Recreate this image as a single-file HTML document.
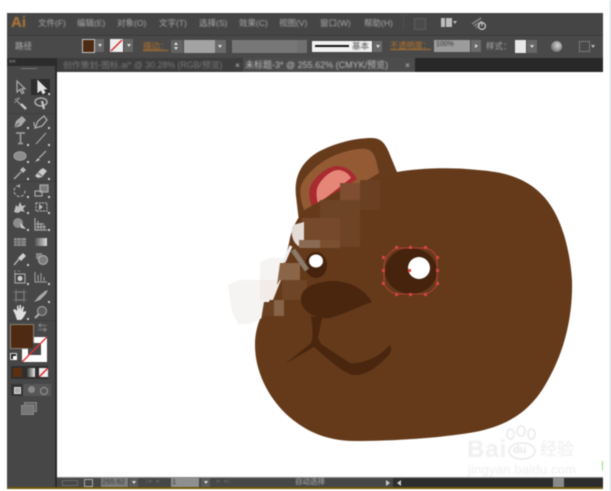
<!DOCTYPE html>
<html><head><meta charset="utf-8">
<style>
html,body{margin:0;padding:0;background:#fff;width:611px;height:491px;overflow:hidden}
body{position:relative;font-family:"Liberation Sans","Noto Sans CJK SC",sans-serif}
.a{position:absolute}
.t{position:absolute;white-space:nowrap;color:#ababab;font-size:8.5px;line-height:10px;filter:blur(.4px)}
#w{position:absolute;left:0;top:0;width:611px;height:491px;filter:blur(.4px)}
</style></head><body>
<div id="w">
<div class="a" style="left:7px;top:13px;width:596px;height:476px;background:#434343"></div>
<!-- menu bar -->
<div class="a" style="left:7px;top:13px;width:596px;height:22px;background:#454545"></div>
<div class="a" style="left:7px;top:35px;width:596px;height:1px;background:#3a3a3a"></div>
<div class="a" style="left:7px;top:36px;width:596px;height:22px;background:#494949"></div>
<div class="t" style="left:11px;top:14px;font-size:15px;line-height:18px;font-weight:bold;color:#b5793c">Ai</div>
<div class="t" style="left:38px;top:18px">文件(F)</div>
<div class="t" style="left:77px;top:18px">编辑(E)</div>
<div class="t" style="left:117px;top:18px">对象(O)</div>
<div class="t" style="left:159px;top:18px">文字(T)</div>
<div class="t" style="left:199px;top:18px">选择(S)</div>
<div class="t" style="left:239px;top:18px">效果(C)</div>
<div class="t" style="left:279px;top:18px">视图(V)</div>
<div class="t" style="left:320px;top:18px">窗口(W)</div>
<div class="t" style="left:364px;top:18px">帮助(H)</div>
<div class="a" style="left:403px;top:15px;width:1px;height:15px;background:#4f4f4f"></div>
<div class="a" style="left:414px;top:18px;width:10px;height:10px;border:1px solid #5c5c5c;background:#4a4a4a"></div>
<div class="a" style="left:441px;top:18px;width:11px;height:9px;background:#bdbdbd"></div>
<div class="a" style="left:445px;top:18px;width:1px;height:9px;background:#444"></div>
<div class="a" style="left:453px;top:21px;border-left:2.5px solid transparent;border-right:2.5px solid transparent;border-top:3px solid #bbb"></div>
<svg class="a" style="left:470px;top:15px" width="18" height="16"><path d="M2 9L11 3M4 11L12 6M6 13L10 10" stroke="#8a8a8a" stroke-width="1.4"/><circle cx="12" cy="11" r="3.4" fill="none" stroke="#ccc" stroke-width="1.2"/><path d="M12 7v4" stroke="#ccc"/></svg>
<!-- control bar -->
<div class="t" style="left:15px;top:41px;color:#b5b5b5">路径</div>
<div class="a" style="left:82px;top:39px;width:11px;height:12px;background:#4d2a12;border:1px solid #c5c5c5"></div>
<div class="a" style="left:95px;top:39px;width:9px;height:13px;background:#666"></div>
<div class="a" style="left:98px;top:44px;border-left:2px solid transparent;border-right:2px solid transparent;border-top:3px solid #ddd"></div>
<svg class="a" style="left:110px;top:39px" width="13" height="13"><rect width="13" height="13" fill="#eee"/><path d="M1 12L12 1" stroke="#d32f2f" stroke-width="1.5"/></svg>
<div class="a" style="left:124px;top:39px;width:9px;height:13px;background:#666"></div>
<div class="a" style="left:127px;top:44px;border-left:2px solid transparent;border-right:2px solid transparent;border-top:3px solid #ddd"></div>
<div class="t" style="left:143px;top:41px;color:#b8742c;text-decoration:underline">描边：</div>
<div class="a" style="left:171px;top:40px;width:12px;height:13px;background:#626262"></div>
<div class="a" style="left:174px;top:42px;border-left:2px solid transparent;border-right:2px solid transparent;border-bottom:3px solid #ddd"></div>
<div class="a" style="left:174px;top:47px;border-left:2px solid transparent;border-right:2px solid transparent;border-top:3px solid #ddd"></div>
<div class="a" style="left:184px;top:40px;width:31px;height:13px;background:#a3a3a3"></div>
<div class="a" style="left:215px;top:40px;width:11px;height:13px;background:#6a6a6a"></div>
<div class="a" style="left:218px;top:45px;border-left:2.5px solid transparent;border-right:2.5px solid transparent;border-top:3px solid #ddd"></div>
<div class="a" style="left:232px;top:40px;width:65px;height:13px;background:#777"></div>
<div class="a" style="left:297px;top:40px;width:10px;height:13px;background:#707070"></div>
<div class="a" style="left:312px;top:41px;width:60px;height:11px;background:#f2f2f2"></div>
<div class="a" style="left:315px;top:45px;width:34px;height:2px;background:#111"></div>
<div class="t" style="left:352px;top:41px;color:#444">基本</div>
<div class="a" style="left:373px;top:41px;width:9px;height:11px;background:#696969"></div>
<div class="a" style="left:376px;top:45px;border-left:2px solid transparent;border-right:2px solid transparent;border-top:3px solid #ddd"></div>
<div class="t" style="left:390px;top:41px;font-size:8.200px;color:#b8742c;text-decoration:underline">不透明度：</div>
<div class="a" style="left:434px;top:40px;width:36px;height:12px;background:#9c9c9c"></div>
<div class="t" style="left:436px;top:40px;color:#333;font-size:7px">100%</div>
<div class="a" style="left:471px;top:40px;width:10px;height:12px;background:#6a6a6a"></div>
<div class="a" style="left:475px;top:44px;border-top:2.5px solid transparent;border-bottom:2.5px solid transparent;border-left:3px solid #ddd"></div>
<div class="t" style="left:486px;top:41px">样式：</div>
<div class="a" style="left:515px;top:40px;width:11px;height:13px;background:#e8e8e8"></div>
<div class="a" style="left:527px;top:40px;width:10px;height:13px;background:#666"></div>
<div class="a" style="left:530px;top:45px;border-left:2px solid transparent;border-right:2px solid transparent;border-top:3px solid #ddd"></div>
<div class="a" style="left:551px;top:41px;width:11px;height:11px;border-radius:50%;background:radial-gradient(circle at 60% 40%,#d5d5d5,#777 70%)"></div>
<div class="a" style="left:579px;top:41px;width:9px;height:9px;border:1px dotted #aaa"></div>
<div class="a" style="left:591px;top:45px;border-left:2.5px solid transparent;border-right:2.5px solid transparent;border-top:3px solid #bbb"></div>
<!-- tabs -->
<div class="a" style="left:7px;top:58px;width:596px;height:14px;background:#282828"></div>
<div class="a" style="left:57px;top:58px;width:186px;height:14px;background:#3d3d3d"></div>
<div class="a" style="left:243px;top:58px;width:172px;height:14px;background:#4c4c4c"></div>
<div class="t" style="left:63px;top:60px;font-size:8.800px;color:#7a7a7a">创作策划-图标.ai* @ 30.28% (RGB/预览)</div>
<div class="t" style="left:235px;top:60px;color:#ccc">×</div>
<div class="t" style="left:245px;top:60px;font-size:9px;color:#bdbdbd">未标题-3* @ 255.62% (CMYK/预览)</div>
<div class="t" style="left:405px;top:60px;color:#ccc">×</div>
<!-- toolbar -->
<div class="a" style="left:7px;top:58px;width:48px;height:431px;background:#474747"></div>
<div class="a" style="left:7px;top:58px;width:48px;height:8px;background:#2c2c2c"></div>
<div class="t" style="left:9px;top:57px;font-size:6px;color:#aaa">««</div>
<div class="a" style="left:21px;top:68px;width:16px;height:1px;background:#777"></div>
<div class="a" style="left:55px;top:58px;width:2px;height:431px;background:#2a2a2a"></div>
<div class="a" style="left:31px;top:79px;width:19px;height:16px;background:#2e2e2e"></div>
<div class="a" style="left:7px;top:113px;width:48px;height:1px;background:#3f3f3f"></div>
<div class="a" style="left:7px;top:181px;width:48px;height:1px;background:#3f3f3f"></div>
<div class="a" style="left:7px;top:320px;width:48px;height:1px;background:#3f3f3f"></div>
<svg class="a" style="left:0;top:0" width="60" height="330" fill="none" stroke="#aeaeae" stroke-width="1.200">
<!-- row1 -->
<g transform="translate(20,87)"><path d="M-3-6V5L0 2.500 2 6.500 3.800 5.500 1.800 1.800H5Z"/></g>
<g transform="translate(41,87)"><path d="M-3-6V5L0 2.500 2 6.500 3.800 5.500 1.800 1.800H5Z" fill="#e2e2e2" stroke="#e2e2e2"/></g>
<!-- row2 -->
<g transform="translate(20,103)"><path d="M-5-4 1 2" stroke-width="1"/><path d="M1 1l5 5" stroke-width="2.400" stroke="#c8c8c8"/><path d="M-3-5l1 2M-6-1l2 .5M-1-5.500l0 2" stroke-width=".9"/></g>
<g transform="translate(41,103)"><ellipse cx="0" cy="-1" rx="6" ry="4" stroke-width="1.500"/><path d="M1-2l2 8" stroke-width="2.200" stroke="#c8c8c8"/></g>
<!-- row3 -->
<g transform="translate(20,122)"><path d="M-6 6-4-1 2-6 6-2 1 4Z" fill="#a8a8a8" stroke="none"/><path d="M-6 6-1 1" stroke="#474747" stroke-width=".8"/></g>
<g transform="translate(41,122)"><path d="M-6 6-3-1 3-6 6-2 1 4Z" stroke-width="1.300"/><path d="M-7 0C-7 3-6 5-5 6"/></g>
<!-- row4 -->
<g transform="translate(20,138)"><path d="M-4-5H5M.5-5V5M-2 5.500H3" stroke="#999" stroke-width="1.700"/></g>
<g transform="translate(41,138)"><path d="M-5 6 5-5" stroke="#a0a0a0"/></g>
<!-- row5 -->
<g transform="translate(20,156)"><ellipse cx="0" cy="0" rx="6" ry="4.300" fill="#8c8c8c" stroke="#9c9c9c"/></g>
<g transform="translate(41,156)"><path d="M-2 2 5-5" stroke="#b8b8b8" stroke-width="1.200"/><path d="M-6 6-3 2-1 4Z" fill="#c4c4c4" stroke="none"/></g>
<!-- row6 -->
<g transform="translate(20,173)"><path d="M-6 6 1-1" stroke-width="1.300"/><path d="M0-3 3-6 6-3 3 0Z" fill="#bbb" stroke="none"/></g>
<g transform="translate(41,173)"><path d="M-6 3-1-3 2-5 6-2 1 4-3 5Z" fill="#c8c8c8" stroke="none"/><path d="M-3 0 1 3" stroke="#6a6a6a"/></g>
<!-- row7 -->
<g transform="translate(20,191)"><path d="M-1-5.500A5.500 5.500 0 1 0 5-1" stroke-dasharray="3 1.500" stroke="#a0a0a0"/><path d="M-3-5 0-7V-3Z" fill="#aaa" stroke="none"/></g>
<g transform="translate(41,191)"><rect x="-1" y="-6" width="8" height="7" fill="#7a7a7a" stroke="#a8a8a8"/><rect x="-6" y="0" width="7" height="5" stroke="#a8a8a8"/></g>
<!-- row8 -->
<g transform="translate(20,207)"><path d="M-6 5-4-2-2 0 0-5 2-1 6-2 3 2 5 5 1 4-2 6Z" fill="#bcbcbc" stroke="none"/></g>
<g transform="translate(41,207)"><rect x="-5" y="-4" width="11" height="8" stroke-dasharray="2 1" stroke="#aaa"/><path d="M-2-3 2 0-2 3Z" fill="#bbb" stroke="none"/></g>
<!-- row9 -->
<g transform="translate(20,224)"><circle cx="-2" cy="-1" r="5" fill="#8c8c8c" stroke="none"/><path d="M0-2 6 5 1 4Z" fill="#c8c8c8" stroke="none"/></g>
<g transform="translate(41,224)"><path d="M-6-6V6H6" stroke="#aaa"/><path d="M-3-3V5M0-1V5M3 1V5M-5 0H3M-5 3H5" stroke="#a2a2a2" stroke-width="1.300"/></g>
<!-- row10 -->
<g transform="translate(20,242)"><rect x="-6" y="-4" width="12" height="8" fill="#8d8d8d" stroke="none"/><path d="M-6-1H6M-6 1.500H6M-3-4V4M1-4V4" stroke="#5b5b5b" stroke-width=".7"/></g>
<g transform="translate(41,242)"><defs><linearGradient id="g"><stop offset="0" stop-color="#555"/><stop offset="1" stop-color="#ddd"/></linearGradient></defs><rect x="-6" y="-4" width="12" height="8" fill="url(#g)" stroke="none"/></g>
<!-- row11 -->
<g transform="translate(20,259)"><path d="M-6 6-1 0" stroke-width="1.500"/><path d="M-2-1 3-6 6-3 1 2Z" fill="#d0d0d0" stroke="none"/></g>
<g transform="translate(41,259)"><circle cx="2" cy="1" r="4.500" fill="#7c7c7c" stroke="#a6a6a6"/><path d="M-5-5H1M-5-3H1M-5-1H-1" stroke="#aaa"/></g>
<!-- row12 -->
<g transform="translate(20,277)"><rect x="-5" y="-3" width="10" height="9" stroke="#a4a4a4"/><circle cx="0" cy="1.500" r="2.500" fill="#d0d0d0" stroke="none"/><path d="M-6-6h2M-2-6H0M-6-4h2" stroke="#8d8d8d" stroke-width="1"/></g>
<g transform="translate(41,277)"><path d="M-6-5V5H6M-3 4V-2M0 4V-4M3 4V0" stroke="#949494" stroke-width="1.200"/></g>
<!-- row13 -->
<g transform="translate(20,296)"><rect x="-4" y="-4" width="8" height="8" stroke="#9a9a9a"/><path d="M-7-4H7M-7 4H7M-4-7V7M4-7V7" stroke="#777" stroke-width=".8"/></g>
<g transform="translate(41,296)"><path d="M-7 6-2 0 4-5 7-6 5-2-1 4Z" fill="#a8a8a8" stroke="none"/></g>
<!-- row14 -->
<g transform="translate(20,313)"><path d="M-5 1-7-3-5-4-3-2V-7L-2-8-1-3-.5-8H1V-3L3-7 4-6 3-1 6-2 6 0 3 5 1 7H-3Z" fill="#e0e0e0" stroke="none"/></g>
<g transform="translate(41,312)"><circle cx="1" cy="-1" r="4.500" stroke="#9a9a9a" fill="#5c5c5c"/><path d="M-2 2-6 6" stroke="#b0b0b0" stroke-width="2"/></g>
<!-- corner marks -->
<g fill="#cfcfcf" stroke="none">
<rect x="48" y="93" width="2" height="2"/><rect x="27" y="127" width="2" height="2"/><rect x="48" y="127" width="2" height="2"/><rect x="27" y="144" width="2" height="2"/><rect x="48" y="144" width="2" height="2"/><rect x="27" y="161" width="2" height="2"/><rect x="48" y="161" width="2" height="2"/><rect x="27" y="178" width="2" height="2"/><rect x="48" y="178" width="2" height="2"/><rect x="27" y="196" width="2" height="2"/><rect x="48" y="196" width="2" height="2"/><rect x="27" y="212" width="2" height="2"/><rect x="48" y="212" width="2" height="2"/><rect x="27" y="229" width="2" height="2"/><rect x="48" y="229" width="2" height="2"/><rect x="27" y="264" width="2" height="2"/><rect x="27" y="283" width="2" height="2"/><rect x="48" y="283" width="2" height="2"/><rect x="48" y="301" width="2" height="2"/><rect x="27" y="318" width="2" height="2"/>
</g>
</svg>
<div class="a" style="left:10px;top:324px;width:22px;height:23px;background:#4e2a12;border:1px solid #8a7f74"></div>
<div class="t" style="left:38px;top:323px;font-size:9px;color:#aaa">⇆</div>
<div class="a" style="left:22px;top:337px;width:25px;height:25px;background:#fff"></div>
<div class="a" style="left:10px;top:324px;width:22px;height:23px;background:#4e2a12;border:1px solid #8a7f74"></div>
<div class="a" style="left:33px;top:343px;width:8px;height:12px;background:#474747"></div>
<div class="a" style="left:28px;top:348px;width:13px;height:7px;background:#474747"></div>
<svg class="a" style="left:22px;top:337px" width="25" height="25"><path d="M0 25L25 0" stroke="#d33" stroke-width="1.500"/></svg>
<div class="a" style="left:10px;top:353px;width:5px;height:5px;background:#222;border:1px solid #ddd"></div>
<div class="a" style="left:13px;top:356px;width:4px;height:4px;background:#fff"></div>
<div class="a" style="left:11px;top:366px;width:37px;height:13px;background:#2f2f2f"></div>
<div class="a" style="left:13px;top:368px;width:9px;height:9px;background:#5a3010"></div>
<div class="a" style="left:26px;top:368px;width:9px;height:9px;background:linear-gradient(90deg,#222,#eee)"></div>
<svg class="a" style="left:39px;top:368px" width="9" height="9"><rect width="9" height="9" fill="#eee"/><path d="M0 9L9 0" stroke="#d22" stroke-width="1.500"/></svg>
<div class="a" style="left:11px;top:384px;width:40px;height:12px;background:#565656"></div>
<div class="a" style="left:11px;top:384px;width:12px;height:12px;background:#333"></div>
<div class="a" style="left:14px;top:387px;width:5px;height:5px;background:#aaa;border:1px solid #ddd"></div>
<div class="a" style="left:28px;top:386px;width:7px;height:7px;border-radius:50%;background:#888"></div>
<div class="a" style="left:40px;top:387px;width:6px;height:6px;border-radius:50%;border:1px solid #999"></div>
<div class="a" style="left:24px;top:402px;width:11px;height:8px;border:1px solid #888;background:#666"></div>
<div class="a" style="left:21px;top:405px;width:11px;height:8px;border:1px solid #888;background:#777"></div>
<!-- canvas -->
<div class="a" style="left:57px;top:72px;width:546px;height:405px;background:#fff"></div>
<svg class="a" style="left:0;top:0" width="611" height="491">
<path d="M296 196C294 178 300 163 318 152C335 143 355 138 372 138C382 138 386 145 390 155L397 172L410 180L300 230Z" fill="#653b1c"/>
<path d="M307 216C301 205 299 193 301 186C305 175 318 163 333 156C345 151 358 148 366 149C372 150 374 154 376 160L379 173Z" fill="#935a34"/>
<path d="M313 209C309 200 308 191 311 185C316 176 327 167 336 166C345 166 352 170 357 179Z" fill="#a92a30"/>
<path d="M318 204C316 196 316 190 318 186C322 178 331 170 338 170C344 170 349 174 351 178Z" fill="#e68678"/>
<path d="M397 172C420 168 450 167 478 170C505 172 528 178 545 198C562 218 570 250 572 280C573 315 565 350 548 380C532 410 510 425 475 432C440 438 395 441 355 441C325 441 303 430 285 413C265 393 255 368 255 345C255 325 263 312 272 293C280 276 287 255 290 238C293 225 300 214 306 209L340 190Z" fill="#653a1b"/>
<!-- mosaic -->
<path d="M340 183h20v17h-20z" fill="#7f4d31"/>
<path d="M360 180h20v30h-20z" fill="#6a4022"/>
<path d="M320 200h40v47h-40z" fill="#6e4426"/>
<path d="M302 218h38v29h-38z" fill="#76492c"/>
<path d="M293 225C290 232 292 243 300 247H304V222Z" fill="#e3dcd7"/>
<path d="M299 240h21v8h-21z" fill="#8b6a54"/>
<path d="M320 240h20v8h-20z" fill="#7b5030"/>
<!-- left mosaic -->
<path d="M228 285 240 280H260V262L270 258H285L282 275 272 295 262 318 250 324H238L232 312Z" fill="#f6f4f2"/>
<path d="M260 280h21l-8 20h-13z" fill="#f2ebe7"/>
<path d="M280 263h20v17h-20l-3 5z" fill="#8b6548"/>
<path d="M282 280h25v20h-25z" fill="#6e4527"/>
<path d="M274 300h10v16h-10z" fill="#876448"/>
<path d="M264 302h10v14h-10l-3 4z" fill="#6b4123"/>
<!-- left eye -->
<ellipse cx="316" cy="265" rx="11" ry="13" fill="#45230d"/>
<ellipse cx="316" cy="261" rx="7" ry="6.500" fill="#fff"/>
<path d="M293 250 307 270" stroke="#8a7a6a" stroke-width="5" fill="none"/>
<path d="M284 262 291 246" stroke="#eeeeee" stroke-width="3" fill="none"/>
<!-- nose & mouth -->
<path d="M301 297C303 286 318 281 335 281C352 282 365 290 372 302C362 305 345 314 330 318C318 320 299 312 301 297Z" fill="#4a260e"/>
<path d="M311 316L322 318L318 338L321 344L350 363C362 364 378 358 390 345C392 348 391 352 389 355C380 364 368 376 353 375C344 373 336 366 314 347L285 364L311 343C314 335 312 325 311 316Z" fill="#4a260e"/>
<!-- right eye -->
<ellipse cx="411" cy="271" rx="26" ry="23" fill="#45230d"/>
<circle cx="419" cy="268" r="11" fill="#fff"/>
<g stroke="#d04040" fill="none" stroke-width=".8"><path d="M397 248C390 251 385 258 384 264V283C386 289 392 293 396 294H425C430 293 436 288 437 284V258C435 252 430 249 425 248Z"/></g>
<g fill="#d84444"><rect x="395" y="246" width="3" height="3"/><rect x="409" y="246" width="3" height="3"/><rect x="424" y="246" width="3" height="3"/><rect x="382" y="256" width="3" height="3"/><rect x="436" y="256" width="3" height="3"/><rect x="382" y="269" width="3" height="3"/><rect x="436" y="269" width="3" height="3"/><rect x="382" y="282" width="3" height="3"/><rect x="436" y="282" width="3" height="3"/><rect x="395" y="293" width="3" height="3"/><rect x="409" y="293" width="3" height="3"/><rect x="424" y="293" width="3" height="3"/><rect x="408" y="269" width="3" height="3"/></g>
</svg>
<!-- watermark -->
<div class="t" style="left:467px;top:437px;font-size:24px;line-height:26px;color:#f0f0f0;font-weight:bold;letter-spacing:1px">Bai</div>
<div class="a" style="left:508px;top:442px;width:24px;height:14px;border:2px solid #eee;border-radius:50%"></div>
<div class="t" style="left:513px;top:444px;font-size:11px;line-height:12px;color:#e6e6e6;font-weight:bold">du</div>
<div class="a" style="left:506px;top:428px;width:5px;height:8px;border:2px solid #eee;border-radius:50%"></div>
<div class="a" style="left:516px;top:425px;width:6px;height:8px;border:2px solid #eee;border-radius:50%"></div>
<div class="a" style="left:527px;top:428px;width:5px;height:8px;border:2px solid #eee;border-radius:50%"></div>
<div class="t" style="left:540px;top:440px;font-size:17px;line-height:20px;color:#ededed">经验</div>
<div class="t" style="left:468px;top:463px;font-size:13px;line-height:14px;color:#eeeeee;letter-spacing:.2px">jingyan.baidu.com</div>
<div class="a" style="left:602px;top:461px;width:1px;height:9px;background:#8fdc70"></div>
<!-- status bar -->
<div class="a" style="left:57px;top:477px;width:546px;height:1px;background:#8a8a8a"></div>
<div class="a" style="left:57px;top:478px;width:546px;height:9px;background:#474747"></div>
<div class="a" style="left:393px;top:478px;width:210px;height:9px;background:#2d2d2d"></div>
<div class="a" style="left:553px;top:478px;width:11px;height:9px;background:#8a8a8a"></div>
<div class="a" style="left:62px;top:480px;width:14px;height:4px;border:1px solid #6b6b6b"></div>
<div class="a" style="left:84px;top:479px;width:7px;height:6px;border:1px solid #aaa"></div>
<div class="a" style="left:101px;top:478px;width:27px;height:9px;background:#7d7d7d"></div>
<div class="t" style="left:102px;top:477px;font-size:7.500px;color:#333">255.62</div>
<div class="a" style="left:129px;top:478px;width:9px;height:9px;background:#5b5b5b"></div>
<div class="a" style="left:132px;top:481px;border-left:2.500px solid transparent;border-right:2.500px solid transparent;border-top:3px solid #ddd"></div>
<div class="t" style="left:146px;top:477px;font-size:7px;color:#666">|◂ &nbsp;◂</div>
<div class="a" style="left:171px;top:478px;width:28px;height:9px;background:#8f8f8f"></div>
<div class="t" style="left:172px;top:477px;font-size:7.500px;color:#333">1</div>
<div class="a" style="left:201px;top:478px;width:9px;height:9px;background:#5b5b5b"></div>
<div class="a" style="left:204px;top:481px;border-left:2.500px solid transparent;border-right:2.500px solid transparent;border-top:3px solid #ddd"></div>
<div class="t" style="left:217px;top:477px;font-size:7px;color:#666">▸ &nbsp;▸|</div>
<div class="t" style="left:295px;top:477px;font-size:7.500px;color:#b5b5b5">自动选择</div>
<div class="a" style="left:386px;top:480px;border-top:3px solid transparent;border-bottom:3px solid transparent;border-left:4px solid #ccc"></div>
<div class="a" style="left:397px;top:480px;border-top:3px solid transparent;border-bottom:3px solid transparent;border-right:4px solid #ccc"></div>
<div class="a" style="left:7px;top:487px;width:596px;height:2px;background:#6e5a10"></div>
<!-- right edge -->
<div class="a" style="left:610px;top:0;width:1px;height:491px;background:#c9d6e2"></div>
</div>
</body></html>
